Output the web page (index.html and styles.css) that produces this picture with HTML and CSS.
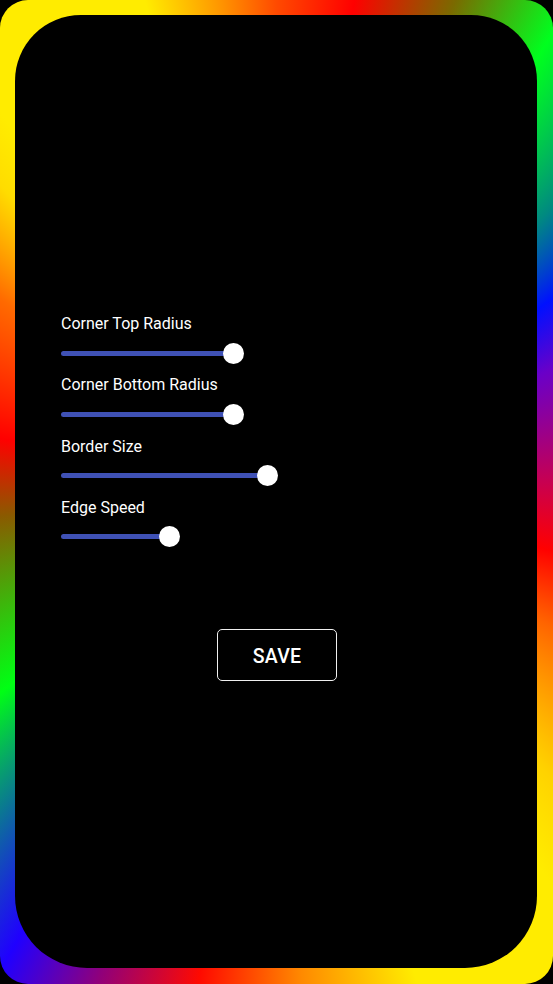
FILE: index.html
```html
<!DOCTYPE html>
<html>
<head>
<meta charset="utf-8">
<link rel="stylesheet" href="styles.css">
</head>
<body>
<div class="frame">
  <div class="screen">
    <div class="controls">
      <div class="row">
        <div class="label">Corner Top Radius</div>
        <div class="slider"><div class="fill" style="width:172px"><span class="thumb"></span></div></div>
      </div>
      <div class="row">
        <div class="label">Corner Bottom Radius</div>
        <div class="slider"><div class="fill" style="width:172px"><span class="thumb"></span></div></div>
      </div>
      <div class="row">
        <div class="label">Border Size</div>
        <div class="slider"><div class="fill" style="width:206px"><span class="thumb"></span></div></div>
      </div>
      <div class="row">
        <div class="label">Edge Speed</div>
        <div class="slider"><div class="fill" style="width:108px"><span class="thumb"></span></div></div>
      </div>
    </div>
    <button class="save">SAVE</button>
  </div>
</div>
</body>
</html>
```
FILE: styles.css
```css
html, body {
  margin: 0;
  padding: 0;
  background: #000;
}
body {
  width: 553px;
  height: 984px;
  overflow: hidden;
  font-family: Roboto, "Noto Sans", "Liberation Sans", sans-serif;
}
.frame {
  box-sizing: border-box;
  width: 553px;
  height: 984px;
  border-radius: 28px;
  padding: 15px 16px 16px 15px;
  background: conic-gradient(from 0deg at 50% 50%,
    #ff4a00 0deg,
    #ff0000 9deg,
    #7a6a00 20deg,
    #00ff1e 31deg,
    #008a80 44deg,
    #0010ff 55deg,
    #6a00c8 66deg,
    #c80050 88deg,
    #ff0000 102deg,
    #ff6400 116deg,
    #ffd200 136deg,
    #ffec00 145deg,
    #ffec00 164deg,
    #ff8a00 177deg,
    #ff0a00 189deg,
    #90007a 200deg,
    #2000ff 210deg,
    #0a7a90 221deg,
    #00ff14 234deg,
    #8a5a00 265deg,
    #ff0000 281deg,
    #ff6a00 305deg,
    #ffdc00 318deg,
    #ffec00 324deg,
    #ffec00 345deg,
    #ff9a00 353deg,
    #ff4a00 360deg);
}
.screen {
  box-sizing: border-box;
  width: 100%;
  height: 100%;
  background: #000;
  border-radius: 66px 66px 72px 72px;
  padding-top: 299px;
  display: flex;
  flex-direction: column;
}
.controls {
  padding-left: 46px;
  display: flex;
  flex-direction: column;
}
.row {
  display: flex;
  flex-direction: column;
  height: 61.3px;
}
.label {
  color: #fff;
  font-size: 16px;
  line-height: 20px;
  height: 20px;
}
.slider {
  margin-top: 8.5px;
  height: 21px;
  display: flex;
  align-items: center;
}
.fill {
  position: relative;
  height: 5px;
  border-radius: 3px;
  background: #3f51b5;
}
.thumb {
  position: absolute;
  right: -10.5px;
  top: -8px;
  width: 21px;
  height: 21px;
  border-radius: 50%;
  background: #fff;
}
.save {
  align-self: center;
  margin-top: 70px;
  margin-left: 2px;
  width: 120px;
  height: 51.5px;
  box-sizing: border-box;
  background: #000;
  border: 1.5px solid #f0f0f0;
  border-radius: 5px;
  color: #fff;
  font-family: Roboto, "Noto Sans", sans-serif;
  font-weight: 500;
  font-size: 19.5px;
  letter-spacing: 0.3px;
  padding: 3px 0 0 0;
}
```
